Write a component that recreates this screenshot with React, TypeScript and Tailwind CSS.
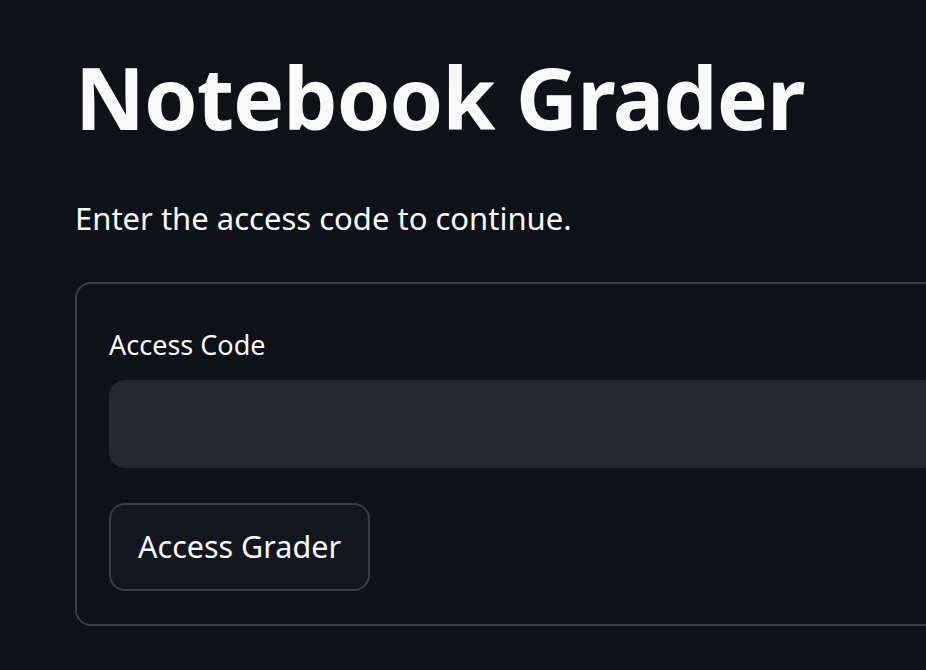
import React from 'react';

const font = { fontFamily: '"Noto Sans", "Open Sans", sans-serif' };

export default function App() {
  return (
    <div className="min-h-[670px] w-full overflow-hidden bg-[#0e1117] text-[#fafafa]" style={font}>
      <div className="pl-[75px] pt-[42px]">
        {/* Title */}
        <h1 className="text-[86px] font-bold leading-[110px] tracking-[-1px]">Notebook Grader</h1>

        <p className="mt-[44px] text-[31px] leading-[44px]">Enter the access code to continue.</p>

        {/* Form */}
        <div className="mt-[42px] w-[1000px] rounded-[16px] border-2 border-[#3a3d44] pl-[32px] pt-[44px] pb-[33px]">
          <label className="block text-[27px] leading-[34px]">Access Code</label>
          <div className="mt-[18px] h-[88px] w-[900px] rounded-[16px] bg-[#262730]" />
          <button className="mt-[35px] flex h-[88px] w-[261px] items-center justify-center rounded-[16px] border-2 border-[#3a3d44] bg-[#13161e] text-[30.5px]">
            Access Grader
          </button>
        </div>
      </div>
    </div>
  );
}
